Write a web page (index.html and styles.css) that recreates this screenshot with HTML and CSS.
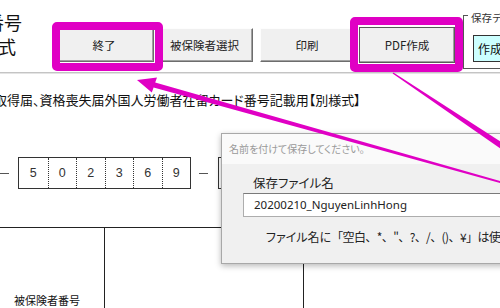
FILE: index.html
```html
<!DOCTYPE html>
<html lang="ja">
<head>
<meta charset="utf-8">
<link rel="stylesheet" href="styles.css">
</head>
<body>
<div class="screen">
  <header class="toolbar">
    <div class="sheet-title">
      <div class="t1">者番号</div>
      <div class="t2">様式</div>
    </div>
    <div class="btn btn-end">終了</div>
    <div class="btn btn-select">被保険者選択</div>
    <div class="btn btn-print">印刷</div>
    <div class="btn btn-pdf">PDF作成</div>
    <div class="groupbox">
      <span class="group-label">保存データ</span>
      <div class="btn-cyan">作成</div>
    </div>
  </header>
  <div class="freeze"></div>
  <main class="sheet">
    <p class="form-title">取得届、資格喪失届外国人労働者在留カード番号記載用【別様式】</p>
    <div class="number-row">
      <span class="dash"></span>
      <div class="digits">
        <span>5</span><span>0</span><span>2</span><span>3</span><span>6</span><span>9</span>
      </div>
      <span class="dash dash-2"></span>
      <div class="digits digits-next">
        <span></span><span></span><span></span><span></span>
      </div>
    </div>
    <div class="table">
      <div class="cell cell-label">被保険者番号</div>
      <div class="cell"></div>
      <div class="cell cell-last"></div>
    </div>
  </main>

  <div class="dialog">
    <div class="dlg-title">名前を付けて保存してください。</div>
    <div class="dlg-body">
      <div class="dlg-label">保存ファイル名</div>
      <div class="dlg-input">20200210_NguyenLinhHong</div>
      <p class="dlg-note"><span class="note-head">ファイル名に</span><span class="note-rest">「空白、*、"、?、/、()、¥」は使用できません。</span></p>
    </div>
  </div>

  <div class="mark mark-end"></div>
  <div class="mark mark-pdf"></div>
  <svg class="arrows" width="500" height="308" viewBox="0 0 500 308">
    <polygon fill="#e000c4" points="137,80 157,77.5 155.2,82.5 506,182.6 505.4,184.6 153.6,87.5 151.8,92.5"/>
    <polygon fill="#e000c4" points="393.4,72.4 511.7,148.9 508.3,153.9 392.6,73.6"/>
  </svg>
</div>
</body>
</html>
```

FILE: styles.css
```css
* {
  box-sizing: border-box;
  margin: 0;
  padding: 0;
}

html, body {
  width: 500px;
  height: 308px;
  overflow: hidden;
  background: #fff;
}

body {
  font-family: "Noto Sans CJK JP", "Noto Sans", sans-serif;
  color: #111;
}

.screen {
  position: relative;
  width: 500px;
  height: 308px;
  overflow: hidden;
}

/* ---------- toolbar ---------- */
.toolbar {
  display: flex;
  align-items: flex-start;
  height: 72px;
}

.sheet-title {
  flex: none;
  width: 22px;
  display: flex;
  flex-direction: column;
  align-items: flex-end;
  padding-top: 10px;
  font-size: 18px;
  line-height: 24px;
  white-space: nowrap;
}

.sheet-title .t2 {
  margin-right: 6px;
}

.btn {
  flex: none;
  display: flex;
  align-items: center;
  justify-content: center;
  height: 34px;
  margin-top: 28px;
  background: #f0f0f0;
  border: 1px solid;
  border-color: #fdfdfd #6d6d6d #6d6d6d #fdfdfd;
  box-shadow: inset -1px -1px 0 #a0a0a0;
  font-size: 11.5px;
  color: #222;
  white-space: nowrap;
}

.btn-end {
  margin-left: 32px;
  width: 100px;
}

.btn-select {
  margin-left: 2px;
  width: 97px;
}

.btn-print {
  margin-left: 7px;
  width: 94px;
}

.btn-pdf {
  margin-left: 5px;
  width: 96px;
  height: 36px;
  margin-top: 27px;
  border-color: #5a5a5a;
}

.groupbox {
  position: relative;
  flex: 1;
  min-width: 0;
  margin-left: 8px;
  margin-top: 15px;
  height: 54px;
  border: 1px solid #555;
  border-right: none;
  padding: 19px 0 0 9px;
}

.group-label {
  position: absolute;
  left: 4px;
  top: -4px;
  padding: 0 3px;
  background: #fff;
  font-size: 10.5px;
  line-height: 12px;
  color: #333;
  white-space: nowrap;
}

.btn-cyan {
  width: 40px;
  height: 27px;
  background: #ccffff;
  border: 1px solid #333;
  font-size: 12px;
  line-height: 25px;
  padding-left: 4px;
  white-space: nowrap;
}

.freeze {
  height: 2px;
  border-top: 1px solid #c4c4c4;
  border-bottom: 1px solid #e4e4e4;
}

/* ---------- sheet ---------- */
.form-title {
  margin-top: 18px;
  margin-left: -6px;
  font-size: 13px;
  line-height: 16px;
  white-space: nowrap;
  font-feature-settings: "palt";
}

.number-row {
  display: flex;
  align-items: center;
  margin-top: 49px;
  height: 32px;
}

.dash {
  flex: none;
  width: 9px;
  height: 1px;
  background: #555;
}

.dash-2 {
  margin-left: 8px;
}

.digits {
  flex: none;
  display: grid;
  grid-template-columns: repeat(6, 1fr);
  width: 173px;
  height: 32px;
  margin-left: 9px;
  border: 1px solid #333;
}

.digits span {
  display: flex;
  align-items: center;
  justify-content: center;
  border-left: 1px dotted #333;
  font-family: "Liberation Sans", sans-serif;
  font-size: 12.5px;
  color: #333;
}

.digits span:first-child {
  border-left: none;
}

.digits-next {
  grid-template-columns: repeat(4, 1fr);
  width: 120px;
  margin-left: 10px;
}

.table {
  display: grid;
  grid-template-columns: 105px 199px 1fr;
  margin-top: 38px;
  height: 90px;
  border-top: 1px solid #222;
}

.cell {
  border-right: 1px solid #222;
}

.cell-last {
  border-right: none;
}

.cell-label {
  padding: 65px 0 0 14px;
  font-size: 11px;
  line-height: 14px;
  white-space: nowrap;
}

/* ---------- dialog ---------- */
.dialog {
  position: absolute;
  left: 221px;
  top: 133px;
  width: 300px;
  height: 131px;
  background: #f0f0f0;
  border: 1px solid #a8a8a8;
  box-shadow: 0 2px 6px rgba(0, 0, 0, 0.28);
}

.dlg-title {
  height: 30px;
  padding-left: 7px;
  background: #fafafa;
  font-size: 10px;
  line-height: 30px;
  color: #999;
  white-space: nowrap;
  font-feature-settings: "palt";
}

.dlg-body {
  padding: 11px 0 0 21px;
}

.dlg-label {
  margin-left: 10px;
  font-size: 12.5px;
  line-height: 16px;
  color: #222;
  font-feature-settings: "palt";
}

.dlg-input {
  margin-top: 2px;
  height: 24px;
  width: 280px;
  background: #fff;
  border: 1px solid #adadad;
  border-top-color: #7a7a7a;
  padding-left: 10px;
  font-family: "Noto Sans", sans-serif;
  font-size: 11.5px;
  line-height: 22px;
  color: #222;
}

.dlg-note {
  margin-top: 12px;
  margin-left: 23px;
  font-size: 12px;
  line-height: 16px;
  color: #222;
  white-space: nowrap;
}

.note-head {
  font-feature-settings: "palt";
}

.note-rest {
  letter-spacing: -0.6px;
}

/* ---------- annotations ---------- */
.mark {
  position: absolute;
  border: 8px solid #e000c4;
  border-radius: 5px;
}

.mark-end {
  left: 52px;
  top: 22px;
  width: 111px;
  height: 49px;
}

.mark-pdf {
  left: 350px;
  top: 17px;
  width: 113px;
  height: 55px;
}

.arrows {
  position: absolute;
  left: 0;
  top: 0;
  pointer-events: none;
}
```
